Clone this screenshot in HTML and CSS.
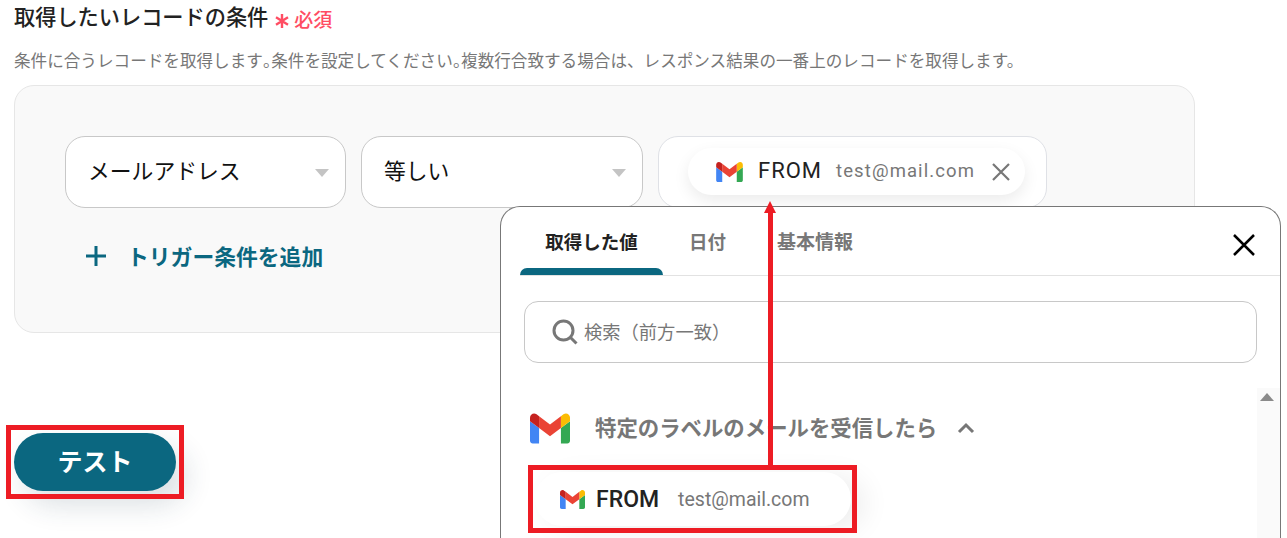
FILE: index.html
```html
<!DOCTYPE html>
<html lang="ja">
<head>
    <meta charset="UTF-8">
    <title>取得したいレコードの条件</title>
    <link rel="stylesheet" href="styles.css">
</head>
<body>
    <svg class="defs" width="0" height="0">
        <symbol id="gmail" viewBox="52 42 88 66">
            <path fill="#4285f4" d="M58 108h14V74L52 59v43c0 3.32 2.69 6 6 6"/>
            <path fill="#34a853" d="M120 108h14c3.32 0 6-2.69 6-6V59l-20 15"/>
            <path fill="#fbbc04" d="M120 48v26l20-15v-8c0-7.42-8.47-11.65-14.4-7.2"/>
            <path fill="#ea4335" d="M72 74V48l24 18 24-18v26L96 92"/>
            <path fill="#c5221f" d="M52 51v8l20 15V48l-5.6-4.2c-5.94-4.45-14.4-.22-14.4 7.2"/>
        </symbol>
    </svg>

    <!-- Condition form -->
    <div class="title-row">
        <h2 class="title">取得したいレコードの条件</h2>
        <span class="required">
            <svg class="required-mark" viewBox="0 0 14 14"><path d="M7 0v14M1 3.2l12 7.6M13 3.2L1 10.8"/></svg>
            必須
        </span>
    </div>
    <p class="desc">条件に合うレコードを取得します<span class="punct">。</span>条件を設定してください<span class="punct">。</span>複数行合致する場合は、レスポンス結果の一番上のレコードを取得します。</p>

    <div class="card">
        <div class="fields">
            <div class="select select-key">メールアドレス<span class="caret"></span></div>
            <div class="select select-op">等しい<span class="caret"></span></div>
            <div class="value-box">
                <div class="chip">
                    <svg class="chip-icon"><use href="#gmail"/></svg>
                    <span class="chip-name">FROM</span>
                    <span class="chip-value">test@mail.com</span>
                    <svg class="chip-close" viewBox="0 0 20 20"><path d="M2 2l16 16M18 2L2 18"/></svg>
                </div>
            </div>
        </div>
        <div class="add-row">
            <svg class="add-icon" viewBox="0 0 22 22"><path d="M11 1v20M1 11h20"/></svg>
            <span>トリガー条件を追加</span>
        </div>
    </div>

    <button class="test-btn">テスト</button>

    <!-- Value picker popup -->
    <div class="popup">
        <div class="tabs">
            <div class="tab tab-active">取得した値</div>
            <div class="tab tab-date">日付</div>
            <div class="tab tab-info">基本情報</div>
            <svg class="popup-close" viewBox="0 0 24 24"><path d="M2 2l20 20M22 2L2 22"/></svg>
        </div>
        <div class="search">
            <svg class="search-icon" viewBox="0 0 26 26"><circle cx="11.5" cy="11.5" r="9.5"/><path d="M18.5 18.5l6 6"/></svg>
            <span class="search-text">検索（前方一致）</span>
        </div>
        <div class="list">
            <div class="list-head">
                <svg class="list-logo"><use href="#gmail"/></svg>
                <span class="list-title">特定のラベルのメールを受信したら</span>
                <svg class="chevron" viewBox="0 0 18 12"><path d="M2 10l7-7 7 7"/></svg>
            </div>
            <div class="item">
                <svg class="item-icon"><use href="#gmail"/></svg>
                <span class="item-name">FROM</span>
                <span class="item-value">test@mail.com</span>
            </div>
            <div class="scrollbar"><span class="scroll-up"></span></div>
        </div>
    </div>

    <!-- Red annotations -->
    <div class="mark mark-btn"></div>
    <div class="mark mark-item"></div>
    <div class="arrow-line"></div>
    <div class="arrow-head"></div>
</body>
</html>
```

FILE: styles.css
```css
/* Page */
html, body {
    height: 538px;
    overflow: hidden;
}

body {
    position: relative;
    margin: 0;
    padding: 0 0 0 14px;
    background: #fff;
    color: #222;
    font-family: "Noto Sans CJK JP", "Noto Sans", sans-serif;
}

.defs {
    position: absolute;
}

/* Heading */
.title-row {
    display: flex;
    align-items: center;
    height: 32px;
}

.title {
    margin: 0;
    font-size: 21.2px;
    font-weight: 500;
    line-height: 32px;
    color: #222;
}

.required {
    display: flex;
    align-items: center;
    gap: 5px;
    margin: 6px 0 0 7px;
    font-size: 19px;
    font-weight: 500;
    line-height: 26px;
    color: #ff4d63;
}

.required-mark {
    width: 14px;
    height: 14px;
    margin-top: 3px;
    fill: none;
    stroke: #ff4d63;
    stroke-width: 2.4;
}

.desc {
    margin: 15px 0 0;
    font-size: 16.6px;
    line-height: 26px;
    color: #777;
    white-space: nowrap;
}

.punct {
    font-feature-settings: "palt";
}

/* Condition card */
.card {
    box-sizing: border-box;
    width: 1181px;
    height: 248px;
    margin-top: 12px;
    padding: 50px 50px 0;
    background: #f9f9f9;
    border: 1px solid #e6e6e6;
    border-radius: 20px;
}

.fields {
    display: flex;
    gap: 15px;
}

.select {
    position: relative;
    box-sizing: border-box;
    height: 72px;
    padding-left: 22px;
    background: #fff;
    border: 1px solid #c8c8c8;
    border-radius: 20px;
    font-size: 21.8px;
    line-height: 66px;
    color: #111;
}

.select-key {
    width: 281px;
}

.select-op {
    width: 282px;
}

.caret {
    position: absolute;
    top: 32px;
    right: 16px;
    border-top: 8px solid #c4c4c4;
    border-left: 7px solid transparent;
    border-right: 7px solid transparent;
}

.value-box {
    box-sizing: border-box;
    width: 389px;
    height: 72px;
    padding: 11px 0 0 29px;
    background: #fff;
    border: 1px solid #dfe1e6;
    border-radius: 20px;
}

.chip {
    display: flex;
    align-items: center;
    width: 337px;
    height: 47px;
    background: #fff;
    border-radius: 24px;
    box-shadow: 0 6px 16px rgba(0, 0, 0, 0.08);
}

.chip-icon {
    width: 27px;
    height: 20px;
    margin-left: 28px;
}

.chip-name {
    margin: 0 0 2px 15px;
    font-family: Roboto, sans-serif;
    font-size: 22px;
    letter-spacing: 1px;
    color: #222;
}

.chip-value {
    margin: 0 0 1px 14px;
    font-family: Roboto, sans-serif;
    font-size: 18.5px;
    letter-spacing: 1.1px;
    color: #777;
}

.chip-close {
    width: 20px;
    height: 20px;
    margin-left: 16px;
    fill: none;
    stroke: #777;
    stroke-width: 2.2;
}

.add-row {
    display: flex;
    align-items: center;
    margin-top: 32px;
    padding-left: 20px;
    font-size: 21.8px;
    font-weight: 700;
    color: #0b6780;
}

.add-icon {
    width: 22px;
    height: 22px;
    margin-right: 20px;
    fill: none;
    stroke: #0b6780;
    stroke-width: 3;
}

/* Test button */
.test-btn {
    display: block;
    width: 162px;
    height: 58px;
    margin-top: 100px;
    padding: 0 0 5px;
    background: #0b6780;
    border: none;
    border-radius: 29px;
    box-shadow: 10px 14px 28px rgba(30, 60, 80, 0.16);
    color: #fff;
    font-family: inherit;
    font-size: 25px;
    font-weight: 700;
}

/* Popup */
.popup {
    position: absolute;
    left: 500px;
    top: 206px;
    box-sizing: border-box;
    width: 781px;
    height: 332px;
    padding: 0 0 0 19px;
    overflow: hidden;
    background: #fff;
    border: 1px solid #777;
    border-bottom: none;
    border-radius: 20px 20px 0 0;
}

.tabs {
    position: relative;
    display: flex;
    height: 68px;
    border-bottom: 1px solid #e2e2e2;
    font-size: 18.5px;
    font-weight: 700;
    line-height: 68px;
    color: #777;
}

.tab-active {
    position: relative;
    width: 143px;
    color: #222;
    text-align: center;
}

.tab-active::after {
    content: "";
    position: absolute;
    left: 0;
    right: 0;
    bottom: 0;
    height: 7px;
    background: #0b6780;
    border-radius: 8px 8px 0 0;
}

.tab-date {
    margin-left: 26px;
}

.tab-info {
    margin-left: 51px;
    font-size: 19px;
}

.popup-close {
    position: absolute;
    right: 24px;
    top: 26px;
    width: 24px;
    height: 24px;
    fill: none;
    stroke: #000;
    stroke-width: 2.5;
}

.search {
    display: flex;
    align-items: center;
    box-sizing: border-box;
    width: 733px;
    height: 62px;
    margin: 25px 0 0 4px;
    padding-left: 27px;
    border: 1px solid #c8c8c8;
    border-radius: 14px;
    font-size: 18.3px;
    color: #777;
}

.search-icon {
    width: 26px;
    height: 26px;
    margin-right: 6px;
    fill: none;
    stroke: #777;
    stroke-width: 3;
}

.search-text {
    margin-bottom: 2px;
}

.list {
    position: relative;
    margin-top: 25px;
}

.list-head {
    display: flex;
    align-items: center;
    height: 80px;
    padding-left: 10px;
    font-size: 21.4px;
    font-weight: 700;
    color: #777;
}

.list-logo {
    width: 40px;
    height: 31px;
}

.list-title {
    margin: 0 0 3px 25px;
}

.chevron {
    width: 18px;
    height: 12px;
    margin-left: 20px;
    fill: none;
    stroke: #777;
    stroke-width: 3;
}

.item {
    display: flex;
    align-items: center;
    box-sizing: border-box;
    width: 316px;
    height: 54px;
    margin: 4px 0 9px 15px;
    background: #fff;
    border-radius: 27px;
    box-shadow: 14px 4px 28px rgba(0, 0, 0, 0.07);
}

.item-icon {
    width: 25px;
    height: 19px;
    margin-left: 25px;
}

.item-name {
    margin-left: 11px;
    font-family: Roboto, sans-serif;
    font-size: 23px;
    font-weight: 500;
    color: #222;
}

.item-value {
    margin-left: 19px;
    font-family: Roboto, sans-serif;
    font-size: 19.5px;
    color: #777;
}

.scrollbar {
    position: absolute;
    top: 0;
    right: 0;
    width: 23px;
    height: 150px;
    background: #fafafa;
}

.scroll-up {
    position: absolute;
    top: 5px;
    left: 3px;
    border-bottom: 8px solid #8a8a8a;
    border-left: 7px solid transparent;
    border-right: 7px solid transparent;
}

/* Red annotations, drawn over the screenshot */
.mark {
    position: absolute;
    box-sizing: border-box;
    border: 5px solid #ed1c24;
}

.mark-btn {
    left: 6px;
    top: 425px;
    width: 178px;
    height: 74px;
}

.mark-item {
    left: 528px;
    top: 465px;
    width: 329px;
    height: 68px;
}

.arrow-line {
    position: absolute;
    left: 768px;
    top: 210px;
    width: 5px;
    height: 256px;
    background: #ed1c24;
}

.arrow-head {
    position: absolute;
    left: 764px;
    top: 201px;
    border-bottom: 12px solid #ed1c24;
    border-left: 6px solid transparent;
    border-right: 6px solid transparent;
}
```
